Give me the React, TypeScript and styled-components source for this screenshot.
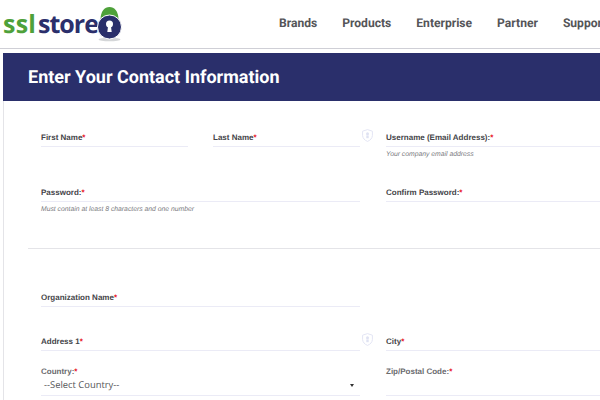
import React from "react";
import styled, { createGlobalStyle } from "styled-components";

const Global = createGlobalStyle`
  html, body { margin: 0; padding: 0; background: #fff; }
  body { width: 600px; height: 400px; overflow: hidden; text-rendering: geometricPrecision; }
  * { box-sizing: border-box; }
`;

const Page = styled.div`
  width: 600px;
  height: 400px;
  overflow: hidden;
  font-family: "Liberation Sans", Arial, sans-serif;
`;

const Header = styled.header`
  display: flex;
  align-items: flex-start;
  height: 49px;
  width: 700px;
  border-bottom: 1px solid #cfcfd6;
`;

const Logo = styled.div`
  display: flex;
  align-items: flex-start;
  width: 279px;
  padding: 0 0 0 3px;
  flex: none;
`;

const LogoWords = styled.div`
  margin-top: 12px;
  width: 93px;
  font: 700 25px/25px "Open Sans", sans-serif;
  display: flex;
`;

const LogoGreen = styled.span`
  color: #4ea13a;
  letter-spacing: 0.2px;
  margin-right: 2px;
`;

const LogoNavy = styled.span`
  color: #2b2f6c;
  letter-spacing: -1px;
`;

const LockMark = styled.svg`
  flex: none;
  margin: 6px 0 0 0;
`;

const Nav = styled.nav`
  display: flex;
  gap: 25px;
  padding-top: 15px;
`;

const NavItem = styled.a`
  font: 700 12.1px/16px Roboto, sans-serif;
  color: #555558;
  white-space: nowrap;
`;

const Main = styled.main`
  margin: 4px 0 0 3px;
  border-left: 1px solid #e4e4e8;
  height: 347px;
`;

const Banner = styled.div`
  margin-left: -1px;
  height: 48px;
  padding: 2px 0 0 25px;
  display: flex;
  align-items: center;
  background: #2a2f6b;
`;

const Title = styled.h1`
  margin: 0;
  font: 700 18px/24px Roboto, sans-serif;
  color: #fff;
`;

const Form = styled.form`
  padding: 26px 0 0 37px;
  width: 700px;
`;

const NamePair = styled.div`
  display: grid;
  grid-template-columns: 147px 147px;
  column-gap: 25px;
`;

const WideRow = styled.div<{ $top?: number }>`
  display: grid;
  grid-template-columns: 319px 214px;
  column-gap: 26px;
  margin-top: ${(p) => p.$top ?? 0}px;
`;

const Field = styled.div`
  position: relative;
  min-width: 0;
`;

const Box = styled.div<{ $h?: number }>`
  height: ${(p) => p.$h ?? 20}px;
  border-bottom: 1px solid #ebebf6;
  display: flex;
  align-items: flex-end;
`;

const Label = styled.label<{ $light?: boolean }>`
  display: block;
  font-size: 8px;
  line-height: 11px;
  font-weight: 700;
  color: ${(p) => (p.$light ? "#6a6a6e" : "#444448")};
  white-space: nowrap;
  padding-bottom: 3px;
`;

const Star = styled.span`
  color: #e8101c;
`;

const Hint = styled.div`
  margin-top: 4px;
  font-size: 6.8px;
  line-height: 8px;
  font-style: italic;
  color: #77777c;
  white-space: nowrap;
`;

const Shield = styled.svg`
  position: absolute;
  right: -13px;
  top: 2px;
`;

const Divider = styled.hr`
  border: 0;
  height: 1px;
  background: #e4e4e8;
  margin: 34px 0 0 -13px;
  width: 620px;
`;

const SelectValue = styled.div`
  flex: 1;
  display: flex;
  justify-content: space-between;
  align-items: center;
  padding: 0 6px 3px 3px;
  font: 400 9.4px/14px "Open Sans", "Liberation Sans", sans-serif;
  color: #555558;
`;

const Caret = styled.span`
  width: 0;
  height: 0;
  border-left: 2.5px solid transparent;
  border-right: 2.5px solid transparent;
  border-top: 3px solid #333;
`;

const ShieldIcon = () => (
  <Shield width="11" height="13" viewBox="0 0 11 13" fill="none">
    <path d="M5.5 .6 10.4 2.2V6.3C10.4 9.2 8.3 11.3 5.5 12.4 2.7 11.3.6 9.2.6 6.3V2.2Z" stroke="#e3e5f4" strokeWidth="1" />
    <circle cx="5.5" cy="4.8" r="1.5" fill="#dfe2f2" />
    <path d="M4.3 6.4h2.4v2.8H4.3z" fill="#dfe2f2" />
  </Shield>
);

const Req = ({ text, light }: { text: string; light?: boolean }) => (
  <Label $light={light}>
    {text}
    <Star>*</Star>
  </Label>
);

export default function App() {
  return (
    <Page>
      <Global />
      <Header>
        <Logo>
          <LogoWords>
            <LogoGreen>ssl</LogoGreen>
            <LogoNavy>store</LogoNavy>
          </LogoWords>
          <LockMark width="28" height="36" viewBox="0 0 28 36" aria-hidden="true">
            <ellipse cx="13.500" cy="33.500" rx="11" ry="1.800" fill="#d4d6d8" />
            <path d="M4.500 14C4.500 5 8.500 1 13.500 1S22.500 5 22.500 14Z" fill="#4ea13a" />
            <circle cx="13.500" cy="21" r="12" fill="#2a2f6b" stroke="#fff" strokeWidth="1" />
            <circle cx="13.500" cy="18" r="3.500" fill="#fff" />
            <path d="M12.300 18h2.400l1 8h-4.400z" fill="#fff" />
          </LockMark>
        </Logo>
        <Nav>
          <NavItem>Brands</NavItem>
          <NavItem>Products</NavItem>
          <NavItem>Enterprise</NavItem>
          <NavItem>Partner</NavItem>
          <NavItem>Support</NavItem>
        </Nav>
      </Header>
      <Main>
        <Banner>
          <Title>Enter Your Contact Information</Title>
        </Banner>
        <Form>
          <WideRow>
            <NamePair>
              <Field>
                <Box>
                  <Req text="First Name" />
                </Box>
              </Field>
              <Field>
                <Box>
                  <Req text="Last Name" />
                </Box>
                <ShieldIcon />
              </Field>
            </NamePair>
            <Field>
              <Box>
                <Req text="Username (Email Address):" />
              </Box>
              <Hint>Your company email address</Hint>
            </Field>
          </WideRow>
          <WideRow $top={23}>
            <Field>
              <Box>
                <Req text="Password:" />
              </Box>
              <Hint>Must contain at least 8 characters and one number</Hint>
            </Field>
            <Field>
              <Box>
                <Req text="Confirm Password:" />
              </Box>
            </Field>
          </WideRow>
          <Divider />
          <WideRow $top={38}>
            <Field>
              <Box>
                <Req text="Organization Name" />
              </Box>
            </Field>
          </WideRow>
          <WideRow $top={24}>
            <Field>
              <Box>
                <Req text="Address 1" />
              </Box>
              <ShieldIcon />
            </Field>
            <Field>
              <Box>
                <Req text="City" />
              </Box>
            </Field>
          </WideRow>
          <WideRow $top={15}>
            <Field>
              <Req text="Country:" light />
              <Box $h={16}>
                <SelectValue>
                  --Select Country--
                  <Caret />
                </SelectValue>
              </Box>
            </Field>
            <Field>
              <Req text="Zip/Postal Code:" light />
              <Box $h={16} />
            </Field>
          </WideRow>
        </Form>
      </Main>
    </Page>
  );
}
